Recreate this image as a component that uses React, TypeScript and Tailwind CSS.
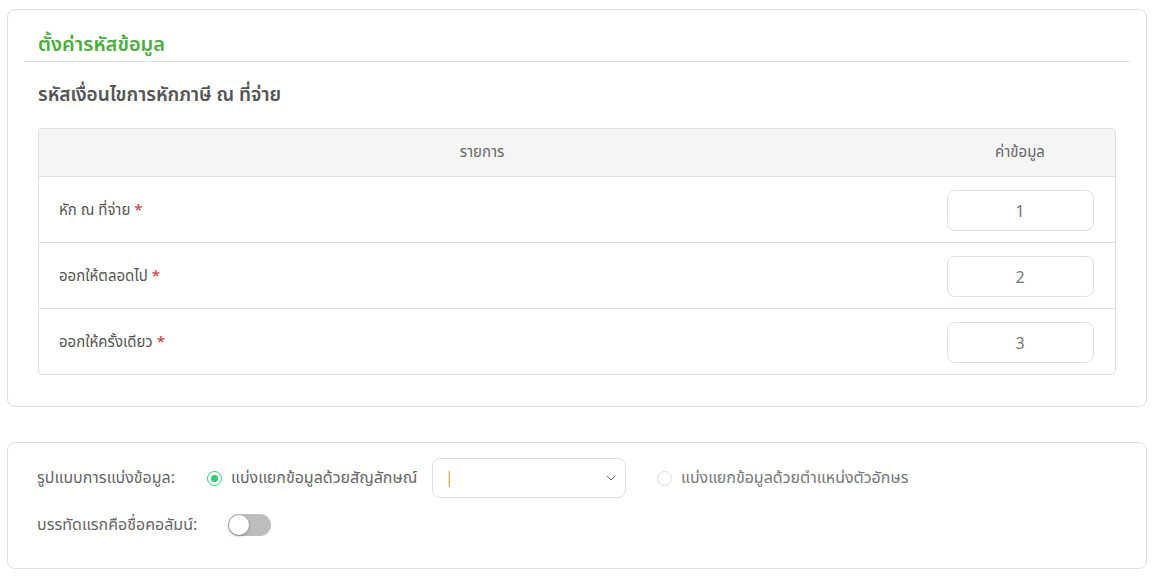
import { ChevronDown } from 'lucide-react'

const rows = [
  { label: 'หัก ณ ที่จ่าย', value: '1' },
  { label: 'ออกให้ตลอดไป', value: '2' },
  { label: 'ออกให้ครั้งเดียว', value: '3' },
]

export default function App() {
  return (
    <div
      className="min-h-[577px] bg-white pl-[7px] pr-[5px] pt-[9px] text-[#666]"
      style={{ fontFamily: '"Noto Sans Thai", "Noto Sans", "Liberation Sans", sans-serif' }}
    >
      {/* settings card */}
      <div className="rounded-lg border border-[#e0e0e0] px-4 pb-[31px]">
        <div className="flex h-[52px] items-end border-b border-[#e0e0e0] px-[14px] pb-[6px]">
          <h2 className="text-[20px] font-semibold leading-none text-[#4cae3f]">ตั้งค่ารหัสข้อมูล</h2>
        </div>
        <h3 className="px-[14px] pt-[22px] text-[19px] font-semibold leading-6 text-[#555]">
          รหัสเงื่อนไขการหักภาษี ณ ที่จ่าย
        </h3>

        <div className="mx-[14px] mt-[20px] overflow-hidden rounded border border-[#e0e0e0]">
          <div className="flex h-[47px] items-center bg-[#f5f5f5] pt-[2px] text-[15px] text-[#666]">
            <div className="flex-1 text-center">รายการ</div>
            <div className="w-[190px] text-center">ค่าข้อมูล</div>
          </div>
          {rows.map((r) => (
            <div key={r.value} className="flex h-[66px] items-center border-t border-[#e0e0e0]">
              <div className="flex-1 pl-5 pt-[3px] text-[15px] text-[#555]">
                {r.label} <span className="text-[#d32f2f]">*</span>
              </div>
              <div className="flex w-[190px] justify-center pt-[2px]">
                <div className="flex h-[41px] w-[147px] items-center justify-center rounded-lg border border-[#e0e0e0] pt-[2px] text-[16px] text-[#777]">
                  {r.value}
                </div>
              </div>
            </div>
          ))}
        </div>
      </div>

      {/* import format card */}
      <div className="mt-[35px] rounded-lg border border-[#e0e0e0] px-[29px] pb-[23px] pt-[15px] text-[16px]">
        <div className="flex h-[40px] items-center">
          <span className="w-[170px]">รูปแบบการแบ่งข้อมูล:</span>
          <span className="flex h-[15px] w-[15px] items-center justify-center rounded-full border-[1.5px] border-[#2ecc71]">
            <span className="h-[7px] w-[7px] rounded-full bg-[#2ecc71]" />
          </span>
          <span className="ml-[9px] w-[183px] whitespace-nowrap">แบ่งแยกข้อมูลด้วยสัญลักษณ์</span>
          <div className="ml-[18px] flex h-[40px] w-[194px] items-center justify-between rounded-lg border border-[#e0e0e0] pl-3 pr-[6px]">
            <span className="text-[#e0a04a]">|</span>
            <ChevronDown size={16} strokeWidth={1.5} className="text-[#666]" />
          </div>
          <span className="ml-[31px] h-[15px] w-[15px] rounded-full border border-[#dcdcdc]" />
          <span className="ml-[9px] text-[#777]">แบ่งแยกข้อมูลด้วยตำแหน่งตัวอักษร</span>
        </div>
        <div className="mt-[7px] flex h-[40px] items-center">
          <span className="w-[191px]">บรรทัดแรกคือชื่อคอลัมน์:</span>
          <span className="relative h-[22px] w-[43px] rounded-full bg-[#bdbdbd]">
            <span className="absolute left-[1px] top-[1px] h-5 w-5 rounded-full bg-white shadow-[0_1px_3px_rgba(0,0,0,0.35)]" />
          </span>
        </div>
      </div>
    </div>
  )
}
